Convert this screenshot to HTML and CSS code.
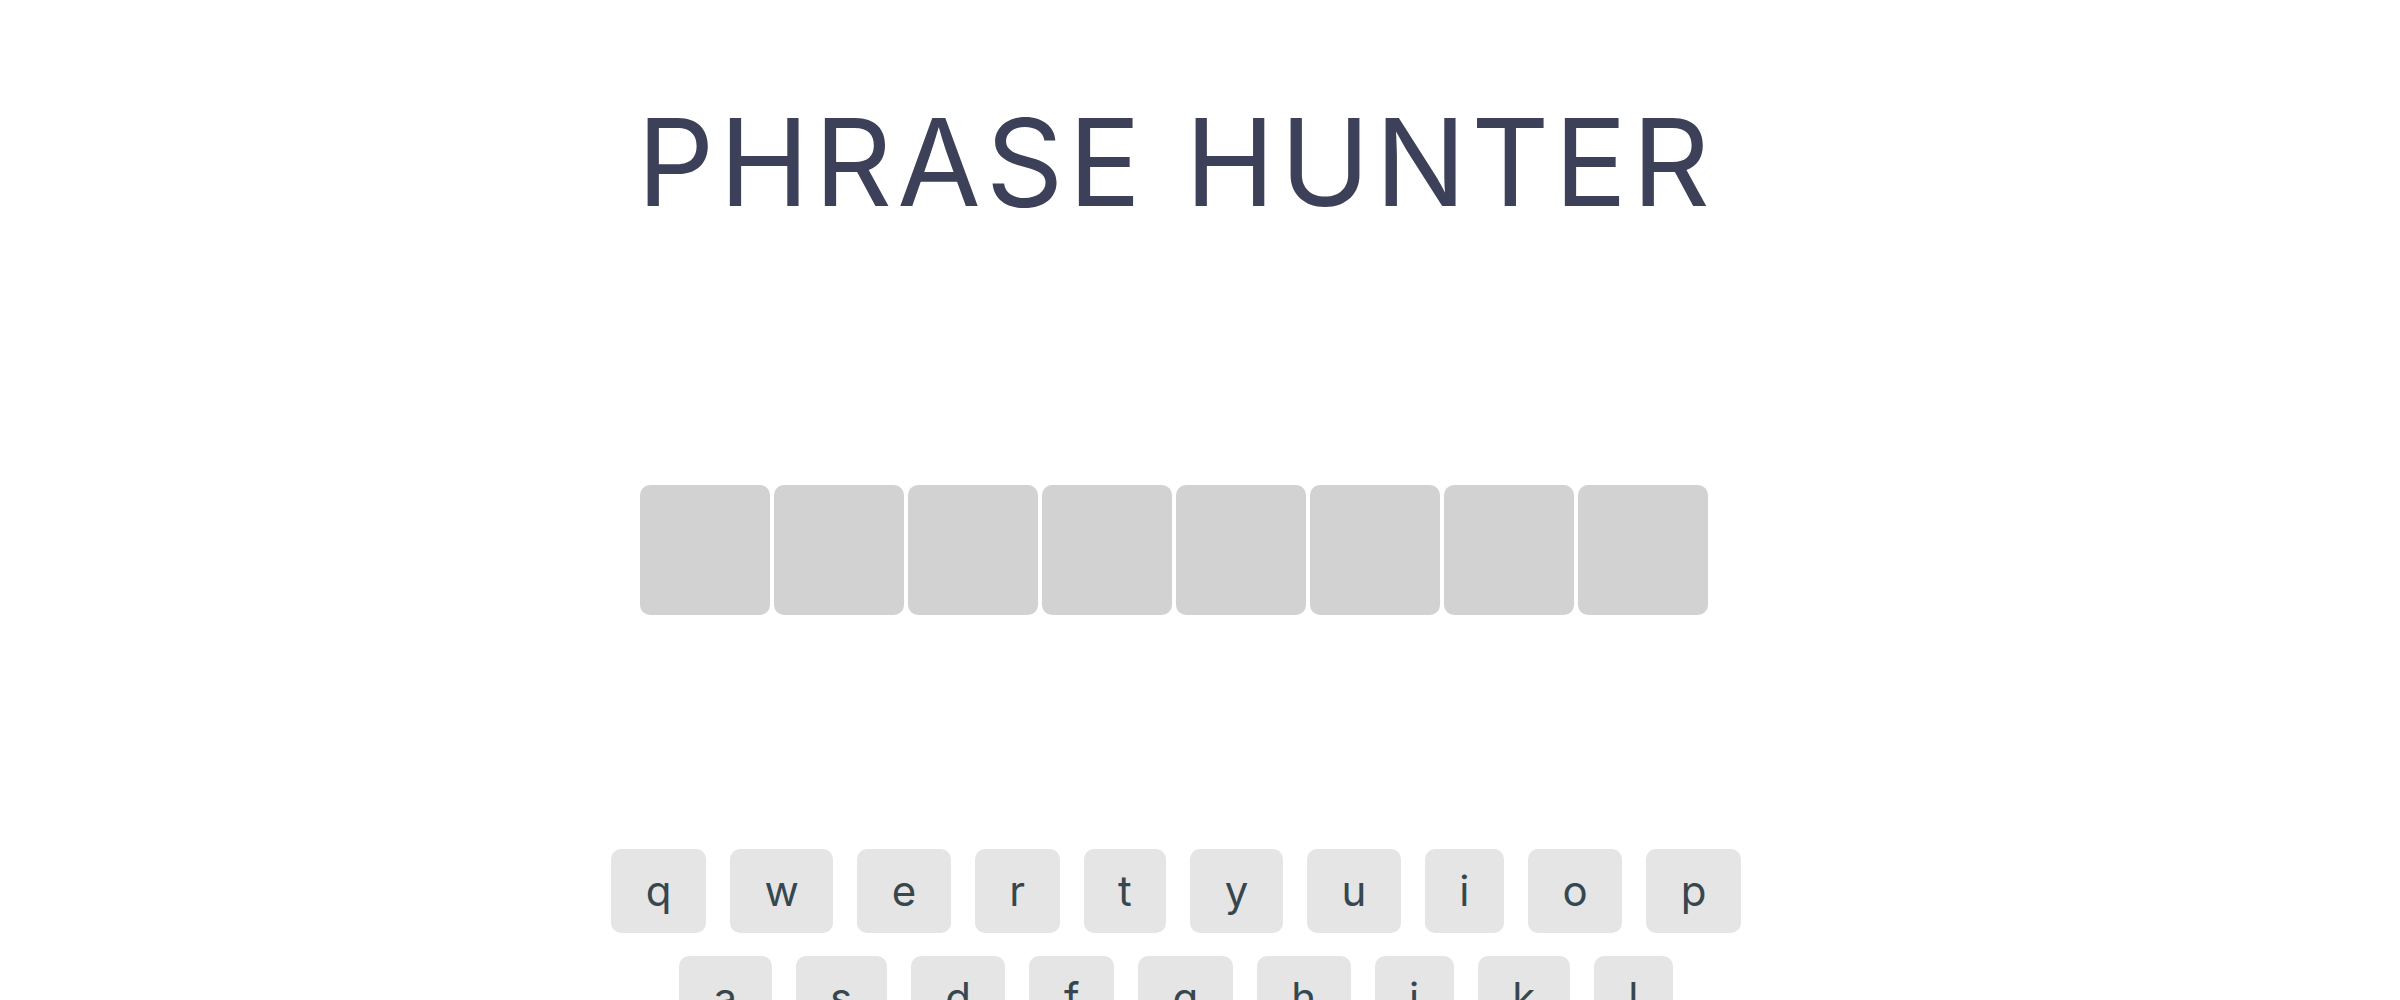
FILE: index.html
```html
<!DOCTYPE html>
<html lang="en">
<head>
<meta charset="utf-8">
<title>Phrase Hunter</title>
<link rel="stylesheet" href="styles.css">
</head>
<body>
<main class="app">
  <header class="banner">
    <h1 class="title">PHRASE HUNTER</h1>
  </header>
  <section class="phrase">
    <ul class="tiles">
      <li class="tile"></li>
      <li class="tile"></li>
      <li class="tile"></li>
      <li class="tile"></li>
      <li class="tile"></li>
      <li class="tile"></li>
      <li class="tile"></li>
      <li class="tile"></li>
    </ul>
  </section>
  <section class="qwerty">
    <div class="keyrow">
      <button class="key">q</button>
      <button class="key">w</button>
      <button class="key">e</button>
      <button class="key">r</button>
      <button class="key">t</button>
      <button class="key">y</button>
      <button class="key">u</button>
      <button class="key">i</button>
      <button class="key">o</button>
      <button class="key">p</button>
    </div>
    <div class="keyrow">
      <button class="key">a</button>
      <button class="key">s</button>
      <button class="key">d</button>
      <button class="key">f</button>
      <button class="key">g</button>
      <button class="key">h</button>
      <button class="key">j</button>
      <button class="key">k</button>
      <button class="key">l</button>
    </div>
    <div class="keyrow">
      <button class="key">z</button>
      <button class="key">x</button>
      <button class="key">c</button>
      <button class="key">v</button>
      <button class="key">b</button>
      <button class="key">n</button>
      <button class="key">m</button>
    </div>
  </section>
</main>
</body>
</html>
```
FILE: styles.css
```css
html, body {
  margin: 0;
  padding: 0;
  background: #ffffff;
}

body {
  font-family: Inter, "Liberation Sans", sans-serif;
}

.app {
  display: flex;
  flex-direction: column;
  align-items: center;
  padding-right: 48px;
}

.banner {
  padding-top: 89px;
}

.title {
  margin: 0;
  font-size: 121px;
  font-weight: 400;
  line-height: normal;
  color: #3c4058;
  letter-spacing: 5px;
}

.phrase {
  margin-top: 250px;
}

.tiles {
  list-style: none;
  margin: 0;
  padding: 0;
  display: flex;
}

.tile {
  width: 130px;
  height: 130px;
  margin-right: 4px;
  border-radius: 10px;
  background: #d2d2d2;
}

.qwerty {
  margin-top: 234px;
  display: flex;
  flex-direction: column;
  align-items: center;
  gap: 23px;
}

.keyrow {
  display: flex;
  gap: 24px;
}

.key {
  height: 84px;
  padding: 0 34.5px;
  border: none;
  border-radius: 10px;
  background: #e5e5e5;
  color: #37474f;
  font-family: Inter, "Liberation Sans", sans-serif;
  font-size: 42px;
  font-weight: 400;
  line-height: 1;
}
```
